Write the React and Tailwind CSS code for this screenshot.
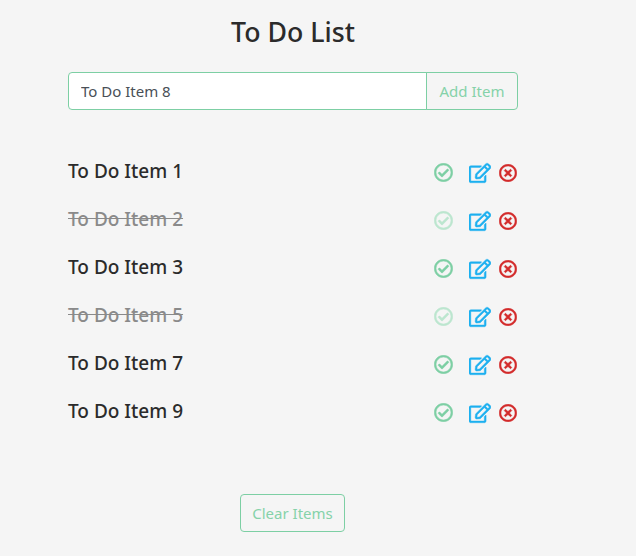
import React from "react";
import { FaRegCheckCircle, FaRegEdit, FaRegTimesCircle } from "react-icons/fa";

const items = [
  { t: "To Do Item 1", done: false },
  { t: "To Do Item 2", done: true },
  { t: "To Do Item 3", done: false },
  { t: "To Do Item 5", done: true },
  { t: "To Do Item 7", done: false },
  { t: "To Do Item 9", done: false },
];

export default function App() {
  return (
    <div className="min-h-[556px] bg-[#f5f5f5] font-['Noto_Sans',sans-serif] text-[#212529]">
      <div className="w-[450px] ml-[68px] flex flex-col items-center">
        <h1 className="mt-[12px] h-[40px] leading-[40px] text-[26.7px] font-medium text-[#2b2b2b]">To Do List</h1>
        <div className="mt-[20px] w-full h-[38px] flex">
          <input
            readOnly
            value="To Do Item 8"
            className="flex-1 min-w-0 h-full bg-white border border-[#7dcfa4] rounded-l-[4px] pl-[12px] text-[15px] text-[#495057] outline-none"
          />
          <button className="w-[92px] h-full -ml-px border border-[#7dcfa4] rounded-r-[4px] text-[15px] text-[#85d2a9]">Add Item</button>
        </div>
        <ul className="mt-[39px] w-full">
          {items.map((it) => (
            <li key={it.t} className="h-[48px] flex items-center justify-between">
              <span className={it.done ? "text-[19px] font-medium line-through text-[#8a8a8a] -mt-[4px]" : "text-[19px] font-medium text-[#2b2b2b] -mt-[4px]"}>
                {it.t}
              </span>
              <span className="flex items-center">
                <FaRegCheckCircle className={it.done ? "text-[19px] stroke-[14] text-[#bce6cf] -mt-[1px]" : "text-[19px] stroke-[14] text-[#7dcfa4] -mt-[1px]"} />
                <FaRegEdit className="ml-[16px] text-[22px] stroke-[10] text-[#1cb0f0]" />
                <FaRegTimesCircle className="ml-[8px] mr-[1px] text-[18px] stroke-[16] text-[#d32a2a]" />
              </span>
            </li>
          ))}
        </ul>
        <button className="mt-[57px] mr-[1px] w-[105px] h-[38px] border border-[#7dcfa4] rounded-[4px] text-[15px] text-[#85d2a9]">Clear Items</button>
      </div>
    </div>
  );
}
